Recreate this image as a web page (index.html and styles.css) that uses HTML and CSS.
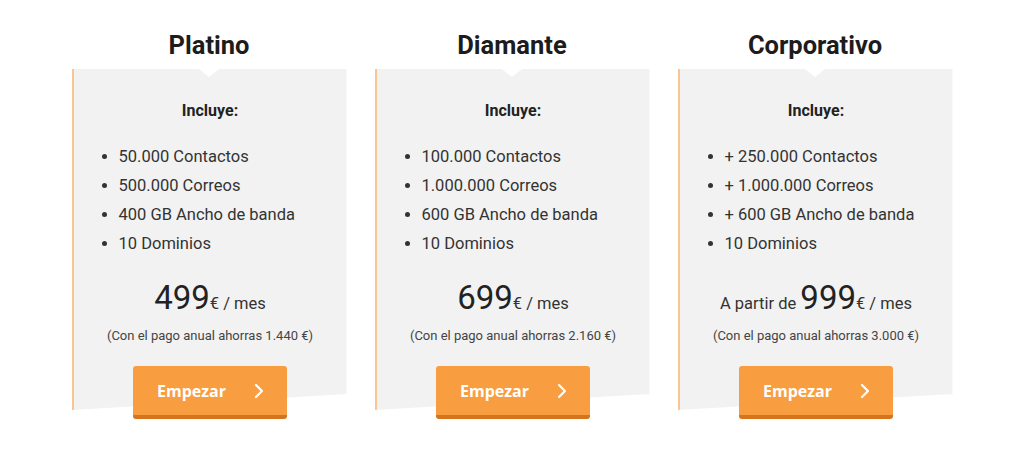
FILE: index.html
```html
<!DOCTYPE html>
<html lang="es">
<head>
<meta charset="utf-8">
<title>Planes</title>
<link rel="stylesheet" href="styles.css">
</head>
<body>
<div class="plans">
  <section class="plan">
    <h2 class="plan-title">Platino</h2>
    <div class="card">
      <h3 class="includes">Incluye:</h3>
      <ul class="features">
        <li>50.000 Contactos</li>
        <li>500.000 Correos</li>
        <li>400 GB Ancho de banda</li>
        <li>10 Dominios</li>
      </ul>
      <p class="price"><span class="amount">499</span><span class="unit">€ / mes</span></p>
      <p class="note">(Con el pago anual ahorras 1.440 €)</p>
      <a class="btn" href="#"><span>Empezar</span><svg width="10" height="16" viewBox="0 0 10 16"><polyline points="2,2 8,8 2,14" fill="none" stroke="#fff" stroke-width="2.2" stroke-linecap="round" stroke-linejoin="round"/></svg></a>
    </div>
  </section>
  <section class="plan">
    <h2 class="plan-title">Diamante</h2>
    <div class="card">
      <h3 class="includes">Incluye:</h3>
      <ul class="features">
        <li>100.000 Contactos</li>
        <li>1.000.000 Correos</li>
        <li>600 GB Ancho de banda</li>
        <li>10 Dominios</li>
      </ul>
      <p class="price"><span class="amount">699</span><span class="unit">€ / mes</span></p>
      <p class="note">(Con el pago anual ahorras 2.160 €)</p>
      <a class="btn" href="#"><span>Empezar</span><svg width="10" height="16" viewBox="0 0 10 16"><polyline points="2,2 8,8 2,14" fill="none" stroke="#fff" stroke-width="2.2" stroke-linecap="round" stroke-linejoin="round"/></svg></a>
    </div>
  </section>
  <section class="plan">
    <h2 class="plan-title">Corporativo</h2>
    <div class="card">
      <h3 class="includes">Incluye:</h3>
      <ul class="features">
        <li>+ 250.000 Contactos</li>
        <li>+ 1.000.000 Correos</li>
        <li>+ 600 GB Ancho de banda</li>
        <li>10 Dominios</li>
      </ul>
      <p class="price"><span class="prefix">A partir de </span><span class="amount">999</span><span class="unit">€ / mes</span></p>
      <p class="note">(Con el pago anual ahorras 3.000 €)</p>
      <a class="btn" href="#"><span>Empezar</span><svg width="10" height="16" viewBox="0 0 10 16"><polyline points="2,2 8,8 2,14" fill="none" stroke="#fff" stroke-width="2.2" stroke-linecap="round" stroke-linejoin="round"/></svg></a>
    </div>
  </section>
</div>
</body>
</html>
```

FILE: styles.css
```css
* { box-sizing: border-box; }

body {
  margin: 0;
  background: #ffffff;
  font-family: Roboto, "Liberation Sans", sans-serif;
  color: #333333;
}

.plans {
  display: flex;
  justify-content: center;
  gap: 28px;
  padding-top: 30px;
}

.plan {
  width: 275px;
  display: flex;
  flex-direction: column;
}

.plan-title {
  margin: 0 0 9px;
  font-size: 25.5px;
  line-height: 30px;
  font-weight: 700;
  color: #1c1c1c;
  text-align: center;
}

.card {
  position: relative;
  display: flex;
  flex-direction: column;
  align-items: center;
  padding: 32px 0 0 2px;
}

.card::before {
  content: "";
  position: absolute;
  top: 0;
  left: 0;
  right: 0;
  bottom: 9px;
  background: #f2f2f2;
  border-left: 2px solid #f9c592;
  clip-path: polygon(0 0, calc(50% - 10px) 0, 50% 8px, calc(50% + 10px) 0, 100% 0, 100% calc(100% - 16px), 0 100%);
  z-index: 0;
}

.card > * { position: relative; z-index: 1; }

.includes {
  margin: 0;
  font-size: 16px;
  line-height: 20px;
  font-weight: 700;
  color: #222;
}

.features {
  align-self: stretch;
  margin: 21px 0 0;
  padding: 0 0 0 45px;
  font-size: 16.5px;
  line-height: 29px;
  color: #333;
}

.price {
  margin: 20px 0 0;
  line-height: 40px;
  font-size: 16.5px;
  color: #333;
}

.amount {
  font-size: 33px;
  font-weight: 400;
  color: #222;
}

.note {
  margin: 4px 0 0;
  font-size: 13px;
  line-height: 16px;
  color: #444;
}

.btn {
  margin-top: 22px;
  width: 154px;
  height: 53px;
  display: flex;
  align-items: center;
  justify-content: space-between;
  padding: 0 23px 0 24px;
  background: #f99e40;
  border-bottom: 4px solid #d5741c;
  border-radius: 3px;
  color: #fff;
  text-decoration: none;
  font-family: "Open Sans", "Liberation Sans", sans-serif;
  font-weight: 700;
  font-size: 16px;
}
```
